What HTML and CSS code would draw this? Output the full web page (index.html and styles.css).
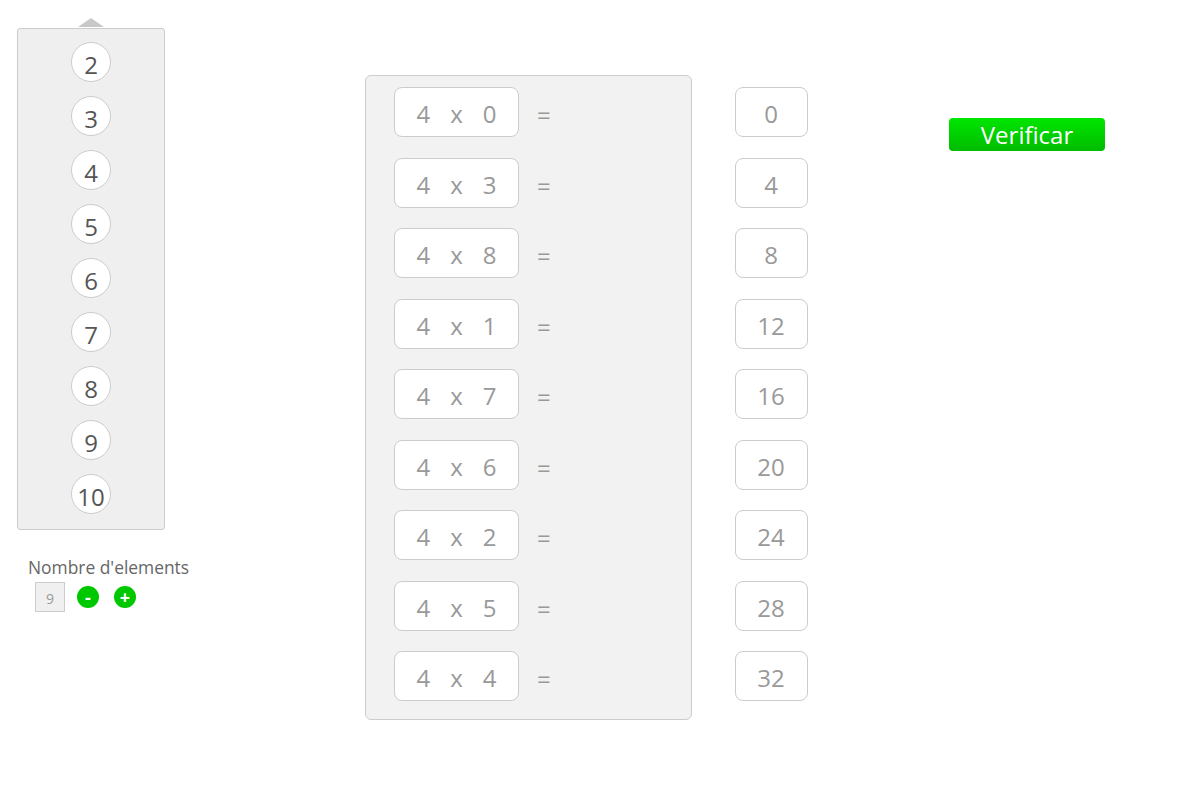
FILE: index.html
```html
<!DOCTYPE html>
<html>
<head>
<meta charset="utf-8">
<link rel="stylesheet" href="styles.css">
</head>
<body>
<div class="page">
  <div class="side">
    <div class="arrow"></div>
    <div class="picker">
      <div class="num">2</div>
      <div class="num">3</div>
      <div class="num">4</div>
      <div class="num">5</div>
      <div class="num">6</div>
      <div class="num">7</div>
      <div class="num">8</div>
      <div class="num">9</div>
      <div class="num">10</div>
    </div>
    <div class="count">
      <div class="count-label">Nombre d'elements</div>
      <div class="count-row">
        <div class="count-box">9</div>
        <div class="round-btn">-</div>
        <div class="round-btn">+</div>
      </div>
    </div>
  </div>
  <div class="board">
    <div class="row"><div class="expr"><span>4</span><span>x</span><span>0</span></div><div class="eq">=</div></div>
    <div class="row"><div class="expr"><span>4</span><span>x</span><span>3</span></div><div class="eq">=</div></div>
    <div class="row"><div class="expr"><span>4</span><span>x</span><span>8</span></div><div class="eq">=</div></div>
    <div class="row"><div class="expr"><span>4</span><span>x</span><span>1</span></div><div class="eq">=</div></div>
    <div class="row"><div class="expr"><span>4</span><span>x</span><span>7</span></div><div class="eq">=</div></div>
    <div class="row"><div class="expr"><span>4</span><span>x</span><span>6</span></div><div class="eq">=</div></div>
    <div class="row"><div class="expr"><span>4</span><span>x</span><span>2</span></div><div class="eq">=</div></div>
    <div class="row"><div class="expr"><span>4</span><span>x</span><span>5</span></div><div class="eq">=</div></div>
    <div class="row"><div class="expr"><span>4</span><span>x</span><span>4</span></div><div class="eq">=</div></div>
  </div>
  <div class="answers">
    <div class="ans">0</div>
    <div class="ans">4</div>
    <div class="ans">8</div>
    <div class="ans">12</div>
    <div class="ans">16</div>
    <div class="ans">20</div>
    <div class="ans">24</div>
    <div class="ans">28</div>
    <div class="ans">32</div>
  </div>
  <div class="actions">
    <button class="verify">Verificar</button>
  </div>
</div>
</body>
</html>
```

FILE: styles.css
```css
html, body {
  margin: 0;
  padding: 0;
  background: #ffffff;
  font-family: "Open Sans", "Liberation Sans", sans-serif;
}

.page {
  display: flex;
  align-items: flex-start;
  padding: 18px 0 0 17px;
}

.side {
  width: 148px;
  display: flex;
  flex-direction: column;
  align-items: center;
}

.arrow {
  width: 0;
  height: 0;
  border-left: 13px solid transparent;
  border-right: 13px solid transparent;
  border-bottom: 9px solid #c8c8c8;
  margin-bottom: 1px;
}

.picker {
  box-sizing: border-box;
  width: 148px;
  background: #efefef;
  border: 1px solid #cccccc;
  border-radius: 3px;
  padding: 13px 0 15px;
  display: flex;
  flex-direction: column;
  align-items: center;
  gap: 14px;
}

.num {
  box-sizing: border-box;
  width: 40px;
  height: 40px;
  border-radius: 50%;
  background: #ffffff;
  border: 1px solid #cccccc;
  display: flex;
  align-items: center;
  justify-content: center;
  font-size: 24px;
  color: #555555;
  padding-top: 4px;
}

.count {
  align-self: flex-start;
  margin: 26px 0 0 11px;
  white-space: nowrap;
}

.count-label {
  font-size: 17.4px;
  color: #666666;
  line-height: 22px;
}

.count-row {
  display: flex;
  align-items: center;
  margin: 4px 0 0 7px;
}

.count-box {
  box-sizing: border-box;
  width: 30px;
  height: 30px;
  background: #f0f0f0;
  border: 1px solid #cccccc;
  color: #999999;
  font-size: 14px;
  display: flex;
  align-items: center;
  justify-content: center;
  padding-top: 3px;
  margin-right: 12px;
}

.round-btn {
  width: 22px;
  height: 22px;
  border-radius: 50%;
  background: #00c800;
  color: #ffffff;
  font-weight: bold;
  font-size: 18px;
  line-height: 22px;
  text-align: center;
  margin-right: 15px;
}

.board {
  box-sizing: border-box;
  width: 327px;
  margin: 57px 0 0 200px;
  background: #f2f2f2;
  border: 1px solid #cccccc;
  border-radius: 6px;
  padding: 11px 0 18px 28px;
  display: flex;
  flex-direction: column;
  gap: 20.5px;
}

.row {
  display: flex;
  align-items: center;
}

.expr {
  box-sizing: border-box;
  width: 125px;
  height: 50px;
  background: #ffffff;
  border: 1px solid #cccccc;
  border-radius: 8px;
  display: flex;
  align-items: center;
  justify-content: center;
  gap: 20px;
  font-size: 24px;
  color: #999999;
  padding-top: 3px;
}

.eq {
  font-size: 24px;
  color: #999999;
  margin-left: 18px;
  padding-top: 5px;
}

.answers {
  display: flex;
  flex-direction: column;
  gap: 20.5px;
  margin: 69px 0 0 43px;
}

.ans {
  box-sizing: border-box;
  width: 73px;
  height: 50px;
  background: #ffffff;
  border: 1px solid #cccccc;
  border-radius: 8px;
  display: flex;
  align-items: center;
  justify-content: center;
  font-size: 24px;
  color: #999999;
  padding: 3px 1px 0 0;
}

.actions {
  margin: 100px 0 0 141px;
}

.verify {
  width: 156px;
  height: 33px;
  border: none;
  border-radius: 4px;
  background: linear-gradient(#00e600, #00bb00);
  color: #ffffff;
  font-family: "Open Sans", "Liberation Sans", sans-serif;
  font-size: 24px;
  line-height: 33px;
  padding: 0;
}
```
